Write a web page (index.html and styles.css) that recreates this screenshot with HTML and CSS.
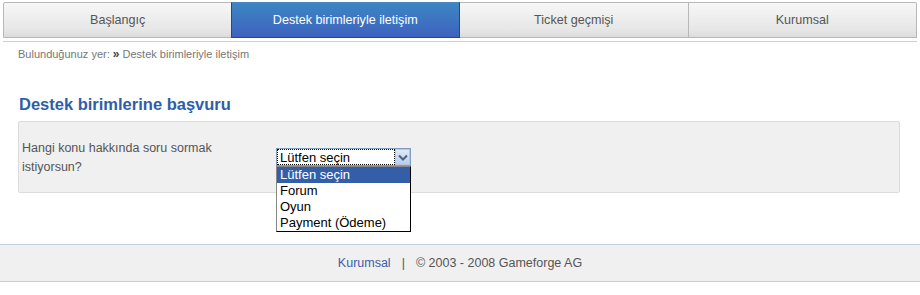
FILE: index.html
```html
<!DOCTYPE html>
<html lang="tr">
<head>
  <meta charset="UTF-8">
  <title>Destek birimleriyle iletişim</title>
  <link rel="stylesheet" href="styles.css">
</head>
<body>
  <div class="nav">
    <a class="tab" href="#">Başlangıç</a>
    <a class="tab active" href="#">Destek birimleriyle iletişim</a>
    <a class="tab" href="#">Ticket geçmişi</a>
    <a class="tab" href="#">Kurumsal</a>
  </div>

  <div class="crumbs">Bulunduğunuz yer: <b>&raquo;</b> Destek birimleriyle iletişim</div>

  <h2 class="title">Destek birimlerine başvuru</h2>

  <div class="box">
    <label class="question">Hangi konu hakkında soru sormak istiyorsun?</label>
    <div class="select">
      <div class="select-field">
        <span class="select-value">Lütfen seçin</span>
        <span class="select-btn">
          <svg width="10" height="7" viewBox="0 0 10 7"><path d="M1 1.5 L5 5.5 L9 1.5" fill="none" stroke="#4d6185" stroke-width="2"/></svg>
        </span>
      </div>
      <ul class="options">
        <li class="selected">Lütfen seçin</li>
        <li>Forum</li>
        <li>Oyun</li>
        <li>Payment (Ödeme)</li>
      </ul>
    </div>
  </div>

  <div class="footer">
    <a href="#">Kurumsal</a><span class="sep">|</span>&copy; 2003 - 2008 Gameforge AG
  </div>
</body>
</html>
```

FILE: styles.css
```css
body {
  margin: 0;
  font-family: "Liberation Sans", Arial, sans-serif;
  background: #fff;
  color: #555;
}
a {
  text-decoration: none;
}

/* top menu */
.nav {
  display: flex;
  margin: 2px 3px 0 3px;
  padding-bottom: 3px;
  border-bottom: 1px solid #d0d0d0;
}
.tab {
  flex: 1 1 0;
  height: 34px;
  line-height: 34px;
  text-align: center;
  font-size: 12.6px;
  color: #555;
  background: linear-gradient(#f7f7f7, #e6e6e6 80%, #dcdcdc);
  border: 1px solid #b8b8b8;
  border-left: none;
}
.tab:first-child {
  border-left: 1px solid #b8b8b8;
  border-radius: 2px 0 0 0;
}
.tab:last-child {
  border-radius: 0 2px 0 0;
}
.tab.active {
  color: #fff;
  background: linear-gradient(#3c86c2, #3e62bf);
  border: 1px solid #2c3f9e;
  border-top-color: #4a86c0;
  margin-left: -2px;
}

.crumbs {
  margin: 5px 0 0 18px;
  font-size: 11px;
  color: #777;
}
.crumbs b {
  color: #444;
  font-size: 12px;
}

.title {
  margin: 34px 0 0 19px;
  font-size: 16.5px;
  color: #2f5ea8;
}

/* form box */
.box {
  display: flex;
  align-items: flex-start;
  margin: 7px 20px 0 18px;
  height: 70px;
  background: #f0f0f0;
  border: 1px solid #dcdcdc;
  border-radius: 2px;
}
.question {
  width: 220px;
  margin: 17px 0 0 3px;
  font-size: 12.5px;
  line-height: 19px;
  color: #555;
}
.select {
  position: relative;
  margin: 26px 0 0 34px;
  font-size: 13px;
  color: #000;
}
.select-field {
  display: flex;
  width: 133px;
  height: 16px;
  border: 1px solid #7f9db9;
  background: #fff;
}
.select-value {
  flex: 1;
  padding-left: 2px;
  line-height: 15px;
  border: 1px dotted #000;
}
.select-btn {
  width: 15px;
  display: flex;
  align-items: center;
  justify-content: center;
  background: linear-gradient(#dfe9f8, #b9cdee);
  border: 1px solid #b6c7e6;
  box-sizing: border-box;
}
.options {
  position: absolute;
  top: 18px;
  left: 0;
  width: 133px;
  margin: 0;
  padding: 0;
  list-style: none;
  background: #fff;
  border: 1px solid #000;
  border-top-color: #888;
  border-left-color: #888;
}
.options li {
  height: 16px;
  line-height: 16px;
  padding-left: 3px;
  white-space: nowrap;
}
.options li.selected {
  background: #335ea8;
  color: #fff;
}

/* footer */
.footer {
  margin-top: 51px;
  height: 36px;
  line-height: 36px;
  text-align: center;
  font-size: 12.5px;
  color: #555;
  background: #f0f0f0;
  border-top: 1px solid #c4cfe0;
  border-bottom: 1px solid #c4cfe0;
}
.footer a {
  color: #3a5fa8;
}
.sep {
  margin: 0 11px;
}
```
